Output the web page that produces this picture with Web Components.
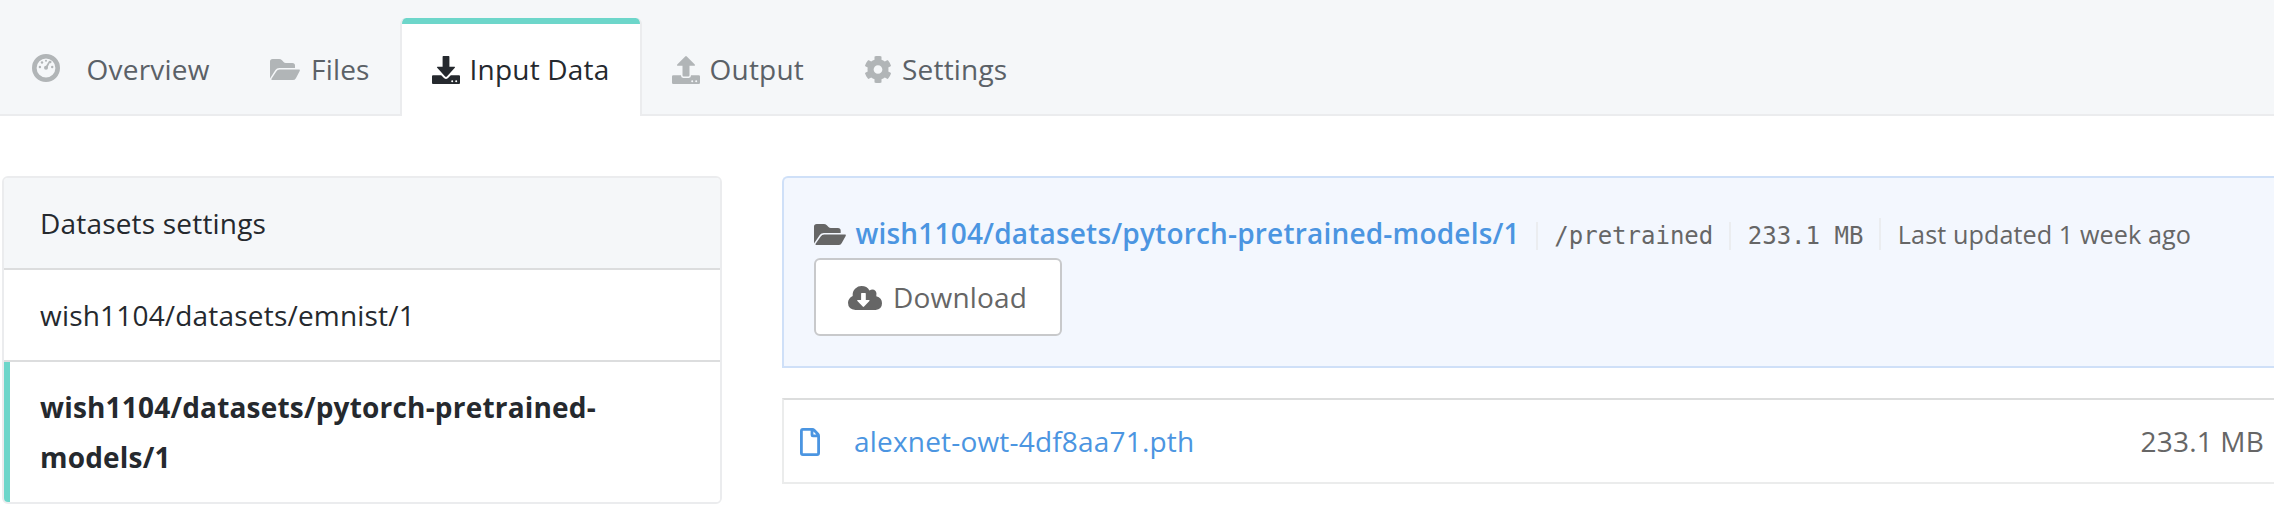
<!DOCTYPE html>
<html lang="en">
<head>
<meta charset="utf-8">
<title>Input Data</title>
<style>
html,body{margin:0;background:#fff}
body{width:2274px;height:510px;overflow:hidden;font:28px/50px "Open Sans",sans-serif;letter-spacing:.19px;color:#25292e}
main{display:flex;gap:60px;padding:60px 0 0 2px}
</style>
</head>
<body>
<tab-bar>
  <tab-item style="--w:240px;--lead:32px;--gap:26.6px"><ui-icon name="gauge"></ui-icon><span slot="label">Overview</span></tab-item>
  <tab-item style="--w:160px;--gap:11px"><ui-icon name="folder"></ui-icon><span slot="label">Files</span></tab-item>
  <tab-item active style="--w:242px;--gap:9.6px"><ui-icon name="download"></ui-icon><span slot="label">Input Data</span></tab-item>
  <tab-item style="--w:193px;--gap:9.6px"><ui-icon name="upload"></ui-icon><span slot="label">Output</span></tab-item>
  <tab-item style="--w:202px;--gap:11px"><ui-icon name="cog"></ui-icon><span slot="label">Settings</span></tab-item>
</tab-bar>
<main>
  <dataset-menu>
    <span slot="title">Datasets settings</span>
    <dataset-row>wish1104/datasets/emnist/1</dataset-row>
    <dataset-row active>wish1104/datasets/pytorch-pretrained-models/1</dataset-row>
  </dataset-menu>
  <dataset-detail>
    <dataset-banner>
      <span slot="name">wish1104/datasets/pytorch-pretrained-models/1</span>
      <span slot="path">/pretrained</span>
      <span slot="size">233.1 MB</span>
      <span slot="date">Last updated 1 week ago</span>
      <download-button slot="action">Download</download-button>
    </dataset-banner>
    <file-row>alexnet-owt-4df8aa71.pth<span slot="size">233.1 MB</span></file-row>
  </dataset-detail>
</main>
<script>
const define = (name, html) => customElements.define(name, class extends HTMLElement {
  constructor() {
    super();
    this.attachShadow({mode: 'open'}).innerHTML = html;
  }
});

const folder = '<path d="M0 2.6Q0 0 2.6 0H9.2Q10.8 0 12 1.2L13.6 3Q14.4 3.9 15.8 3.9H22.4Q25 3.9 25 6.4V8.9H9.2Q6.8 8.9 5.4 11L0 19.5Z"/><path d="M9.6 10.6H29Q30.5 10.6 29.7 12L25.9 19.2Q24.9 21.1 22.8 21.1H2.4Q.7 21.1 1.5 19.7L6.3 12.4Q7.4 10.6 9.6 10.6Z"/>';
// name: [width, height, vertical shift, viewBox, drawing]
const ICONS = {
  gauge: [28, 28, -1, '0 0 28 28', '<circle cx="14" cy="14" r="11.7" fill="none" stroke="currentColor" stroke-width="4.6"/><circle cx="14" cy="13.8" r="2"/><path d="M13.2 13.2L17.2 6.8L18.5 7.6L14.9 14.4Z"/><circle cx="7.9" cy="13" r="1.2"/><circle cx="20.2" cy="13" r="1.2"/><circle cx="10" cy="8.5" r="1.2"/><circle cx="14" cy="6.7" r="1"/><circle cx="18.3" cy="8" r="1.2"/>'],
  folder: [30, 21, .5, '0 0 30 21', folder],
  download: [28, 28, 1, '0 0 28 28', '<path d="M11.3 0H16.7Q17.4 0 17.4 .7V10.7H22.4Q23.6 10.7 22.8 11.8L14.9 20.5Q14 21.4 13.1 20.5L5.2 11.8Q4.4 10.7 5.6 10.7H10.6V.7Q10.6 0 11.3 0Z"/><path fill-rule="evenodd" d="M1 19.2H9.2L12.2 22.3Q14 23.9 15.8 22.3L18.8 19.2H27Q28 19.2 28 20.2V27Q28 28 27 28H1Q0 28 0 27V20.2Q0 19.2 1 19.2ZM20.2 24.2a1 1 0 1 0 0 2a1 1 0 1 0 0-2ZM24.2 24.2a1 1 0 1 0 0 2a1 1 0 1 0 0-2Z"/>'],
  upload: [28, 28, 1, '0 0 28 28', '<path d="M13.2 .4Q14 -.4 14.8 .4L22.8 8.6Q23.5 9.8 22.3 9.8H17.5V19.3Q17.5 20.5 16.3 20.5H11.7Q10.5 20.5 10.5 19.3V9.8H5.7Q4.5 9.8 5.2 8.6Z"/><path fill-rule="evenodd" d="M1.3 19.2H9V19.6Q9 21.9 11.2 21.9H16.8Q19 21.9 19 19.6V19.2H26.7Q28 19.2 28 20.5V26.7Q28 28 26.7 28H1.3Q0 28 0 26.7V20.5Q0 19.2 1.3 19.2ZM20.2 24.2a1 1 0 1 0 0 2a1 1 0 1 0 0-2ZM24.2 24.2a1 1 0 1 0 0 2a1 1 0 1 0 0-2Z"/>'],
  cog: [26, 27, .5, '18 8 476 496', '<path d="M487.4 315.7l-42.6-24.6c4.3-23.2 4.3-47 0-70.2l42.6-24.6c4.9-2.8 7.1-8.6 5.5-14-11.1-35.6-30-67.8-54.7-94.6-3.8-4.1-10-5.1-14.8-2.3L380.8 110c-17.9-15.4-38.5-27.3-60.8-35.1V25.8c0-5.6-3.9-10.5-9.4-11.7-36.7-8.2-74.3-7.8-109.2 0-5.5 1.2-9.4 6.1-9.4 11.7V75c-22.2 7.9-42.8 19.8-60.8 35.1L88.7 85.5c-4.9-2.8-11-1.9-14.8 2.3-24.7 26.7-43.6 58.9-54.7 94.6-1.7 5.4.6 11.2 5.5 14L67.3 221c-4.3 23.2-4.3 47 0 70.2l-42.6 24.6c-4.9 2.8-7.1 8.6-5.5 14 11.1 35.6 30 67.8 54.7 94.6 3.8 4.1 10 5.1 14.8 2.3l42.6-24.6c17.9 15.4 38.5 27.3 60.8 35.1v49.2c0 5.6 3.9 10.5 9.4 11.7 36.7 8.2 74.3 7.8 109.2 0 5.5-1.2 9.4-6.1 9.4-11.7v-49.2c22.2-7.9 42.8-19.8 60.8-35.1l42.6 24.6c4.9 2.8 11 1.9 14.8-2.3 24.7-26.7 43.6-58.9 54.7-94.6 1.5-5.5-.7-11.3-5.6-14.1zM256 336c-44.1 0-80-35.9-80-80s35.9-80 80-80 80 35.9 80 80-35.9 80-80 80z"/>'],
  bigfolder: [32, 21, 1.5, '0 0 30 21', folder],
  cloud: [34, 24, 1, '0 0 34 24', '<path fill-rule="evenodd" d="M7.5 24Q0 23.3 0 16.8Q0 12.2 4.7 9.9Q4.2 5.2 7.4 2.4Q10 0 13.5 0Q19 0 21.5 4.4Q25 2.4 27.6 5Q29.2 7 28.3 10.3Q34 12 34 17.3Q34 23.3 27.6 24ZM13.1 7.6V14H9.8Q8.6 14 9.4 15L14.7 20.6Q15.4 21.2 16.1 20.6L21.4 15Q22.1 14 20.9 14H17.8V7.6Q17.8 7 17.2 7H13.7Q13.1 7 13.1 7.6Z"/>'],
  file: [20, 28, 1, '0 0 20 28', '<path d="M2.9 1.4H12.3Q13.4 1.4 14.2 2.2L17.8 5.9Q18.6 6.7 18.6 7.9V25.1Q18.6 26.6 17.1 26.6H2.9Q1.4 26.6 1.4 25.1V2.9Q1.4 1.4 2.9 1.4ZM12 1.6V7Q12 7.9 12.9 7.9H18.4" fill="none" stroke="currentColor" stroke-width="2.8"/>']
};

customElements.define('ui-icon', class extends HTMLElement {
  constructor() { super(); this.attachShadow({mode: 'open'}); }
  connectedCallback() {
    const [w, h, dy, box, art] = ICONS[this.getAttribute('name')];
    this.shadowRoot.innerHTML = `<style>:host{display:block;flex:none;width:${w}px;height:${h}px;margin-top:${dy * 2}px}svg{display:block;overflow:visible}</style><svg width="${w}" height="${h}" viewBox="${box}" preserveAspectRatio="none" fill="currentColor" aria-hidden="true">${art}</svg>`;
  }
});

define('tab-bar', `<style>
:host{display:flex;box-sizing:border-box;height:116px;padding-top:18px;background:#f5f7f9;box-shadow:inset 0 -2px #ebecee}
</style><slot></slot>`);

define('tab-item', `<style>
:host{display:flex;flex:none;align-items:center;gap:var(--gap);box-sizing:border-box;width:var(--w);height:98px;padding:4px 0 0 var(--lead,30px);color:#5b6167;white-space:nowrap}
::slotted(ui-icon){color:#b1b5b7}
:host([active]){border:solid #ebecee;border-width:0 2px;border-radius:6px 6px 0 0;background:linear-gradient(#6dd6ca 6px,#fff 6px);color:#25292e}
:host([active]) ::slotted(ui-icon){color:#25292e}
</style><slot></slot><slot name="label"></slot>`);

define('dataset-menu', `<style>
:host{display:block;box-sizing:border-box;width:720px;height:328px;border:2px solid #ebecee;border-radius:6px;overflow:hidden;flex:none}
header{padding:20px 36px;background:#f5f7f9}
</style><header><slot name="title"></slot></header><slot></slot>`);

define('dataset-row', `<style>
:host{display:block;padding:20px 36px;border-top:2px solid #dcddde}
:host([active]){font-weight:700;background:linear-gradient(90deg,#6dd6ca 6px,#fff 6px);padding-right:80px}
</style><slot></slot>`);

define('dataset-detail', `<style>
:host{display:flex;flex-direction:column;gap:30px;flex:1}
</style><slot></slot>`);

define('dataset-banner', `<style>
:host{display:block;box-sizing:border-box;height:192px;padding:30px 0 0 30px;border:2px solid #cfe0f8;border-right:0;border-radius:6px 0 0 0;background:#f3f7fe;color:#666}
.line{display:flex;align-items:baseline;height:50px;white-space:nowrap}
ui-icon{align-self:center;margin-right:9.5px;width:32px}
.name{color:#4b95e1;font-weight:600}
.cell{margin-left:16px;padding-left:17px;border-left:2px solid #ebedf0;line-height:28px;letter-spacing:0}
.mono{padding-left:16.5px;font-family:"DejaVu Sans Mono",monospace;font-size:24px}
.date{padding-left:16.5px;font-size:25.2px;line-height:32px;letter-spacing:.08px}
</style><div class="line"><ui-icon name="bigfolder"></ui-icon><slot name="name" class="name"></slot><div class="cell mono"><slot name="path"></slot></div><div class="cell mono"><slot name="size"></slot></div><div class="cell date"><slot name="date"></slot></div></div><slot name="action"></slot>`);

define('download-button', `<style>
:host{display:flex;align-items:center;gap:11px;box-sizing:border-box;width:248px;height:78px;padding-left:32px;border:2px solid #c8c9cb;border-radius:6px;background:#fff;color:#666}
</style><ui-icon name="cloud"></ui-icon><slot></slot>`);

define('file-row', `<style>
:host{display:flex;align-items:center;box-sizing:border-box;height:86px;padding:0 10px 0 16px;border:2px solid #ebecec;border-top-color:#dcdddd;border-right:0;color:#4b95e1}
ui-icon{margin-right:34px}
.size{margin-left:auto;color:#666}
</style><ui-icon name="file"></ui-icon><slot></slot><div class="size"><slot name="size"></slot></div>`);
</script>
</body>
</html>
